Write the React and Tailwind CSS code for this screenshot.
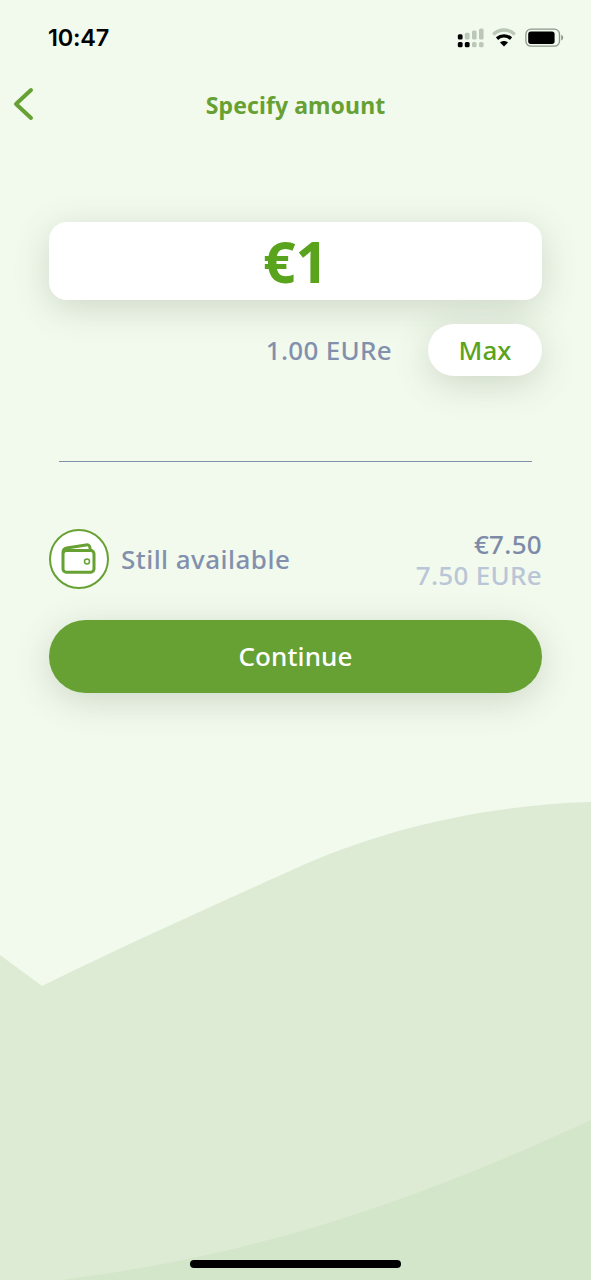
import React, { useState } from 'react';

const BackgroundWaves = () => (
  <svg className="absolute inset-0" width="591" height="1280" viewBox="0 0 591 1280" fill="none">
    <path d="M0 955 L42 986 C130 943 205 909 290 871 C380 829 485 805 591 802 V1280 H0 Z" fill="#ddead4" />
    <path d="M60 1280 C264 1255 424 1197 591 1120 V1280 Z" fill="#d4e6ca" />
  </svg>
);

const SignalIcon = () => (
  <svg width="27" height="20" viewBox="0 0 27 20">
    <g fill="#000">
      <rect x="0.8" y="6.2" width="4.8" height="5.2" rx="1.5" />
      <rect x="0.8" y="14" width="4.8" height="5.2" rx="1.5" />
      <rect x="7.8" y="14" width="4.8" height="5.2" rx="1.5" />
    </g>
    <g fill="#bcc7b8">
      <rect x="7.8" y="4.8" width="4.8" height="6.8" rx="1.5" />
      <rect x="15" y="2.6" width="4.6" height="9" rx="1.5" />
      <rect x="22" y="0.6" width="4.6" height="11" rx="1.5" />
      <rect x="15" y="14" width="4.6" height="5.2" rx="1.5" />
      <rect x="22" y="14" width="4.6" height="5.2" rx="1.5" />
    </g>
  </svg>
);

const WifiIcon = () => (
  <svg width="24" height="20" viewBox="0 0 24 20" fill="none">
    <path d="M1.2 6.4 C7.4 0.6 16.6 0.6 22.8 6.4" stroke="#bcc7b8" strokeWidth="3.4" />
    <path d="M5 10.6 C9.1 7 14.9 7 19 10.6" stroke="#000" strokeWidth="3.4" />
    <path d="M8 14.4 C10.3 12.4 13.7 12.4 16 14.4 L12 18.6 Z" fill="#000" />
  </svg>
);

const BatteryIcon = () => (
  <svg width="39" height="20" viewBox="0 0 39 20" fill="none">
    <rect x="0.9" y="1.2" width="33.6" height="17" rx="5" stroke="#8f978c" strokeWidth="1.3" />
    <rect x="3.2" y="3.5" width="26.4" height="12.4" rx="2.6" fill="#000" />
    <path d="M36.2 6.8 C38.8 7.8 38.8 11.6 36.2 12.6 Z" fill="#8f978c" />
  </svg>
);

const WalletIcon = () => (
  <svg width="36" height="32" viewBox="0 0 36 32" fill="none" stroke="#67a033">
    <rect x="2" y="7.6" width="31" height="21.6" rx="3.2" strokeWidth="3" />
    <path d="M2 10 C2 6.5 3.4 5.4 5.6 5.1 L25.1 1.9 C28.2 1.4 29.2 3.4 29.4 7.6" strokeWidth="3" />
    <circle cx="26" cy="18.6" r="2.5" strokeWidth="1.5" />
  </svg>
);

const StatusBar = () => (
  <div className="flex h-[76px] items-center justify-between pl-12 pr-[27px]">
    <span className="font-['Inter',sans-serif] text-[23.5px] font-semibold tracking-[-0.2px] text-black">10:47</span>
    <div className="flex items-center">
      <SignalIcon />
      <div className="ml-2 mr-[9px]">
        <WifiIcon />
      </div>
      <BatteryIcon />
    </div>
  </div>
);

const App = () => {
  const [amount] = useState(1);
  const available = 7.5;

  return (
    <div className="relative h-[1280px] w-[591px] overflow-hidden bg-[#f2faed] font-['Noto_Sans',sans-serif]">
      <BackgroundWaves />

      <div className="relative flex h-full flex-col">
        <StatusBar />

        {/* Header */}
        <header className="grid h-14 grid-cols-[48px_1fr_48px] items-center">
          <button className="pl-3" aria-label="Back">
            <svg width="24" height="36" viewBox="0 0 24 36" fill="none">
              <path d="M19 4 L4 18 L19 32" stroke="#67a033" strokeWidth="4" strokeLinecap="round" strokeLinejoin="round" />
            </svg>
          </button>
          <h1 className="pt-0.5 text-center text-[23px] font-bold tracking-[0.1px] text-[#67a033]">Specify amount</h1>
        </header>

        <main className="px-[49px] pt-[90px]">
          {/* Amount */}
          <div className="flex h-[78px] items-center justify-center rounded-[18px] bg-white text-[57px] font-bold leading-none text-[#5aa31c] shadow-[0_8px_36px_rgba(60,80,50,0.2)]">
            €{amount}
          </div>

          <div className="mt-6 flex items-center justify-end">
            <span className="mr-9 text-[26px] font-medium tracking-[0.3px] text-[#8290ae]">{amount.toFixed(2)} EURe</span>
            <button className="h-[52px] w-[114px] rounded-full bg-white text-[26px] font-medium text-[#5aa31c] shadow-[0_8px_36px_rgba(60,80,50,0.2)]">
              Max
            </button>
          </div>

          <div className="mx-2.5 mt-[84.5px] h-[1.5px] bg-[#8290ae]" />

          {/* Balance */}
          <div className="mt-[67px] flex h-[60px] items-center">
            <div className="flex size-[60px] items-center justify-center rounded-full border-2 border-[#67a033] bg-white">
              <WalletIcon />
            </div>
            <span className="ml-3 text-[26px] font-medium tracking-[0.45px] text-[#8290ae]">Still available</span>
            <div className="ml-auto pt-0.5 text-right text-[26px] font-medium leading-[31px] tracking-[0.3px]">
              <p className="text-[#7d8ba9]">€{available.toFixed(2)}</p>
              <p className="text-[#b9c6d8]">{available.toFixed(2)} EURe</p>
            </div>
          </div>

          <button className="mt-[31px] h-[73px] w-full rounded-full bg-[#67a033] text-[26px] font-medium tracking-[0.1px] text-white shadow-[0_8px_36px_rgba(60,80,50,0.2)]">
            Continue
          </button>
        </main>

        {/* Home indicator */}
        <div className="mx-auto mb-3 mt-auto h-2 w-[211px] rounded-full bg-black" />
      </div>
    </div>
  );
};

export default App;
